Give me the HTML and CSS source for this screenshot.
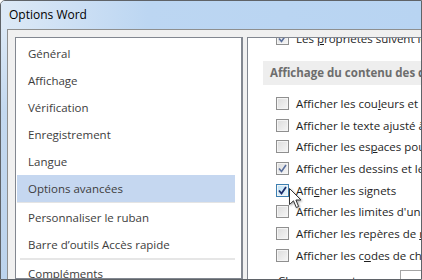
FILE: index.html
```html
<!DOCTYPE html>
<html lang="fr">
<head>
    <meta charset="UTF-8">
    <title>Options Word</title>
    <link rel="stylesheet" href="styles.css">
</head>
<body>
    <div class="window">
        <div class="title-bar">Options Word</div>

        <div class="client">
            <!-- Menu de gauche -->
            <ul class="nav">
                <li>Général</li>
                <li>Affichage</li>
                <li>Vérification</li>
                <li>Enregistrement</li>
                <li>Langue</li>
                <li class="selected">Options avancées</li>
                <li>Personnaliser le ruban</li>
                <li>Barre d’outils Accès rapide</li>
                <li class="separator"></li>
                <li>Compléments</li>
            </ul>

            <!-- Panneau des options -->
            <div class="options">
                <div class="row cut">
                    <span class="box checked"><svg width="9" height="9" viewBox="0 0 9 9"><path d="M1 4.5 L3.5 7.5 L8 1" /></svg></span>
                    <span>Les <u>p</u>ropriétés suivent le texte</span>
                </div>

                <div class="section">Affichage du contenu des documents</div>

                <div class="row"><span class="box"></span><span>Afficher les cou<u>l</u>eurs et images d’arrière-plan</span></div>
                <div class="row"><span class="box"></span><span>Afficher le texte ajusté à la fenêtre</span></div>
                <div class="row"><span class="box"></span><span>Afficher les es<u>p</u>aces pour les images</span></div>
                <div class="row"><span class="box checked"><svg width="9" height="9" viewBox="0 0 9 9"><path d="M1 4.5 L3.5 7.5 L8 1" /></svg></span><span>Afficher les dessins et les zones de texte</span></div>
                <div class="row"><span class="box checked focus"><svg width="9" height="9" viewBox="0 0 9 9"><path d="M1 4.5 L3.5 7.5 L8 1" /></svg></span><span>Affi<u>c</u>her les signets</span></div>
                <div class="row"><span class="box"></span><span>Afficher les limites d'un texte</span></div>
                <div class="row"><span class="box"></span><span>Afficher les repères de <u>r</u>ognage</span></div>
                <div class="row"><span class="box"></span><span>Afficher les c<u>o</u>des de champs</span></div>
                <div class="row plain"><span class="label">Champs avec trame de fond :</span><span class="select"></span></div>
            </div>
        </div>

        <!-- Pointeur de la souris -->
        <svg class="cursor" width="13" height="21" viewBox="0 0 13 21">
            <path d="M0.5 0.5 L0.5 16.5 L4.5 12.8 L7.3 19.5 L9.6 18.5 L6.9 12 L12 12 Z" fill="#fff" stroke="#333" stroke-width="1" stroke-linejoin="round"/>
        </svg>
    </div>
</body>
</html>
```

FILE: styles.css
```css
body {
    margin: 0;
    padding: 0;
    font-family: "Open Sans", "Noto Sans", sans-serif;
    font-size: 11.5px;
}

.window {
    position: relative;
    width: 422px;
    height: 280px;
    box-sizing: border-box;
    border: 1px solid #5f6368;
    border-radius: 5px 0 0 0;
    background: linear-gradient(#e2edf8, #c3d8ef 40%, #bcd3ec);
    display: flex;
    flex-direction: column;
    overflow: hidden;
}

.title-bar {
    height: 28px;
    line-height: 28px;
    padding-left: 8px;
    color: #000;
    font-size: 12px;
    background: linear-gradient(to right, #dde9f6, #bcd6f2 35%, #b8d4f2);
}

.client {
    flex: 1;
    display: flex;
    gap: 4px;
    margin-left: 6px;
    padding: 7px 0 0 7px;
    background-color: #f0f0f0;
    border-top: 1px solid #8e8f8f;
    border-left: 1px solid #8e8f8f;
    min-height: 0;
}

.nav {
    list-style: none;
    margin: 0;
    padding: 2px 0 0 0;
    width: 225px;
    flex-shrink: 0;
    background-color: white;
    border: 1px solid #828790;
    border-right-width: 2px;
    overflow: hidden;
}

.nav li {
    height: 27px;
    line-height: 27px;
    margin: 0 6px 0 1px;
    padding-left: 11px;
    color: #3d3d3d;
    white-space: nowrap;
}

.nav li.selected {
    background-color: #c5d7f0;
    margin-bottom: 2px;
    box-shadow: 0 1px 0 #e4e4e4;
}

.nav li.separator {
    height: 2px;
    margin: 0 6px 0 4px;
    background-color: #e6e6e6;
}

.options {
    flex: 1;
    background-color: white;
    border-top: 1px solid #828790;
    border-left: 1px solid #828790;
    overflow: hidden;
    min-width: 0;
    color: #1e1e1e;
}

.row {
    display: flex;
    align-items: center;
    height: 21.7px;
    padding-left: 28px;
    white-space: nowrap;
}

.row.cut {
    margin-top: -10px;
}

.row.plain {
    padding-left: 30px;
    margin-top: 3px;
    gap: 10px;
}

.label {
    width: 112px;
    flex-shrink: 0;
    overflow: hidden;
}

.section {
    margin: 11px 0 8px 15px;
    height: 24px;
    line-height: 24px;
    padding-left: 7px;
    background-color: #eeeeee;
    color: #6d6d6d;
    font-weight: bold;
    white-space: nowrap;
}

.box {
    width: 11px;
    height: 11px;
    margin-right: 7px;
    border: 1px solid #8f8f8f;
    background: linear-gradient(135deg, #dcdcdc, #f6f6f6);
    box-shadow: inset 0 0 0 1px #f4f4f4;
    flex-shrink: 0;
    display: flex;
    align-items: center;
    justify-content: center;
}

.box svg path {
    fill: none;
    stroke: #5a6f9c;
    stroke-width: 1.6;
}

.box.focus {
    border-color: #3c7fb1;
    background: linear-gradient(135deg, #bfe2f6, #eaf6fd);
}

.box.focus svg path {
    stroke: #1d2d6b;
    stroke-width: 1.8;
}

.select {
    width: 40px;
    height: 18px;
    flex-shrink: 0;
    border: 1px solid #a5a5a5;
    background-color: white;
}

.cursor {
    position: absolute;
    left: 288px;
    top: 187px;
    filter: drop-shadow(1px 1px 1px rgba(0, 0, 0, 0.35));
}
```
